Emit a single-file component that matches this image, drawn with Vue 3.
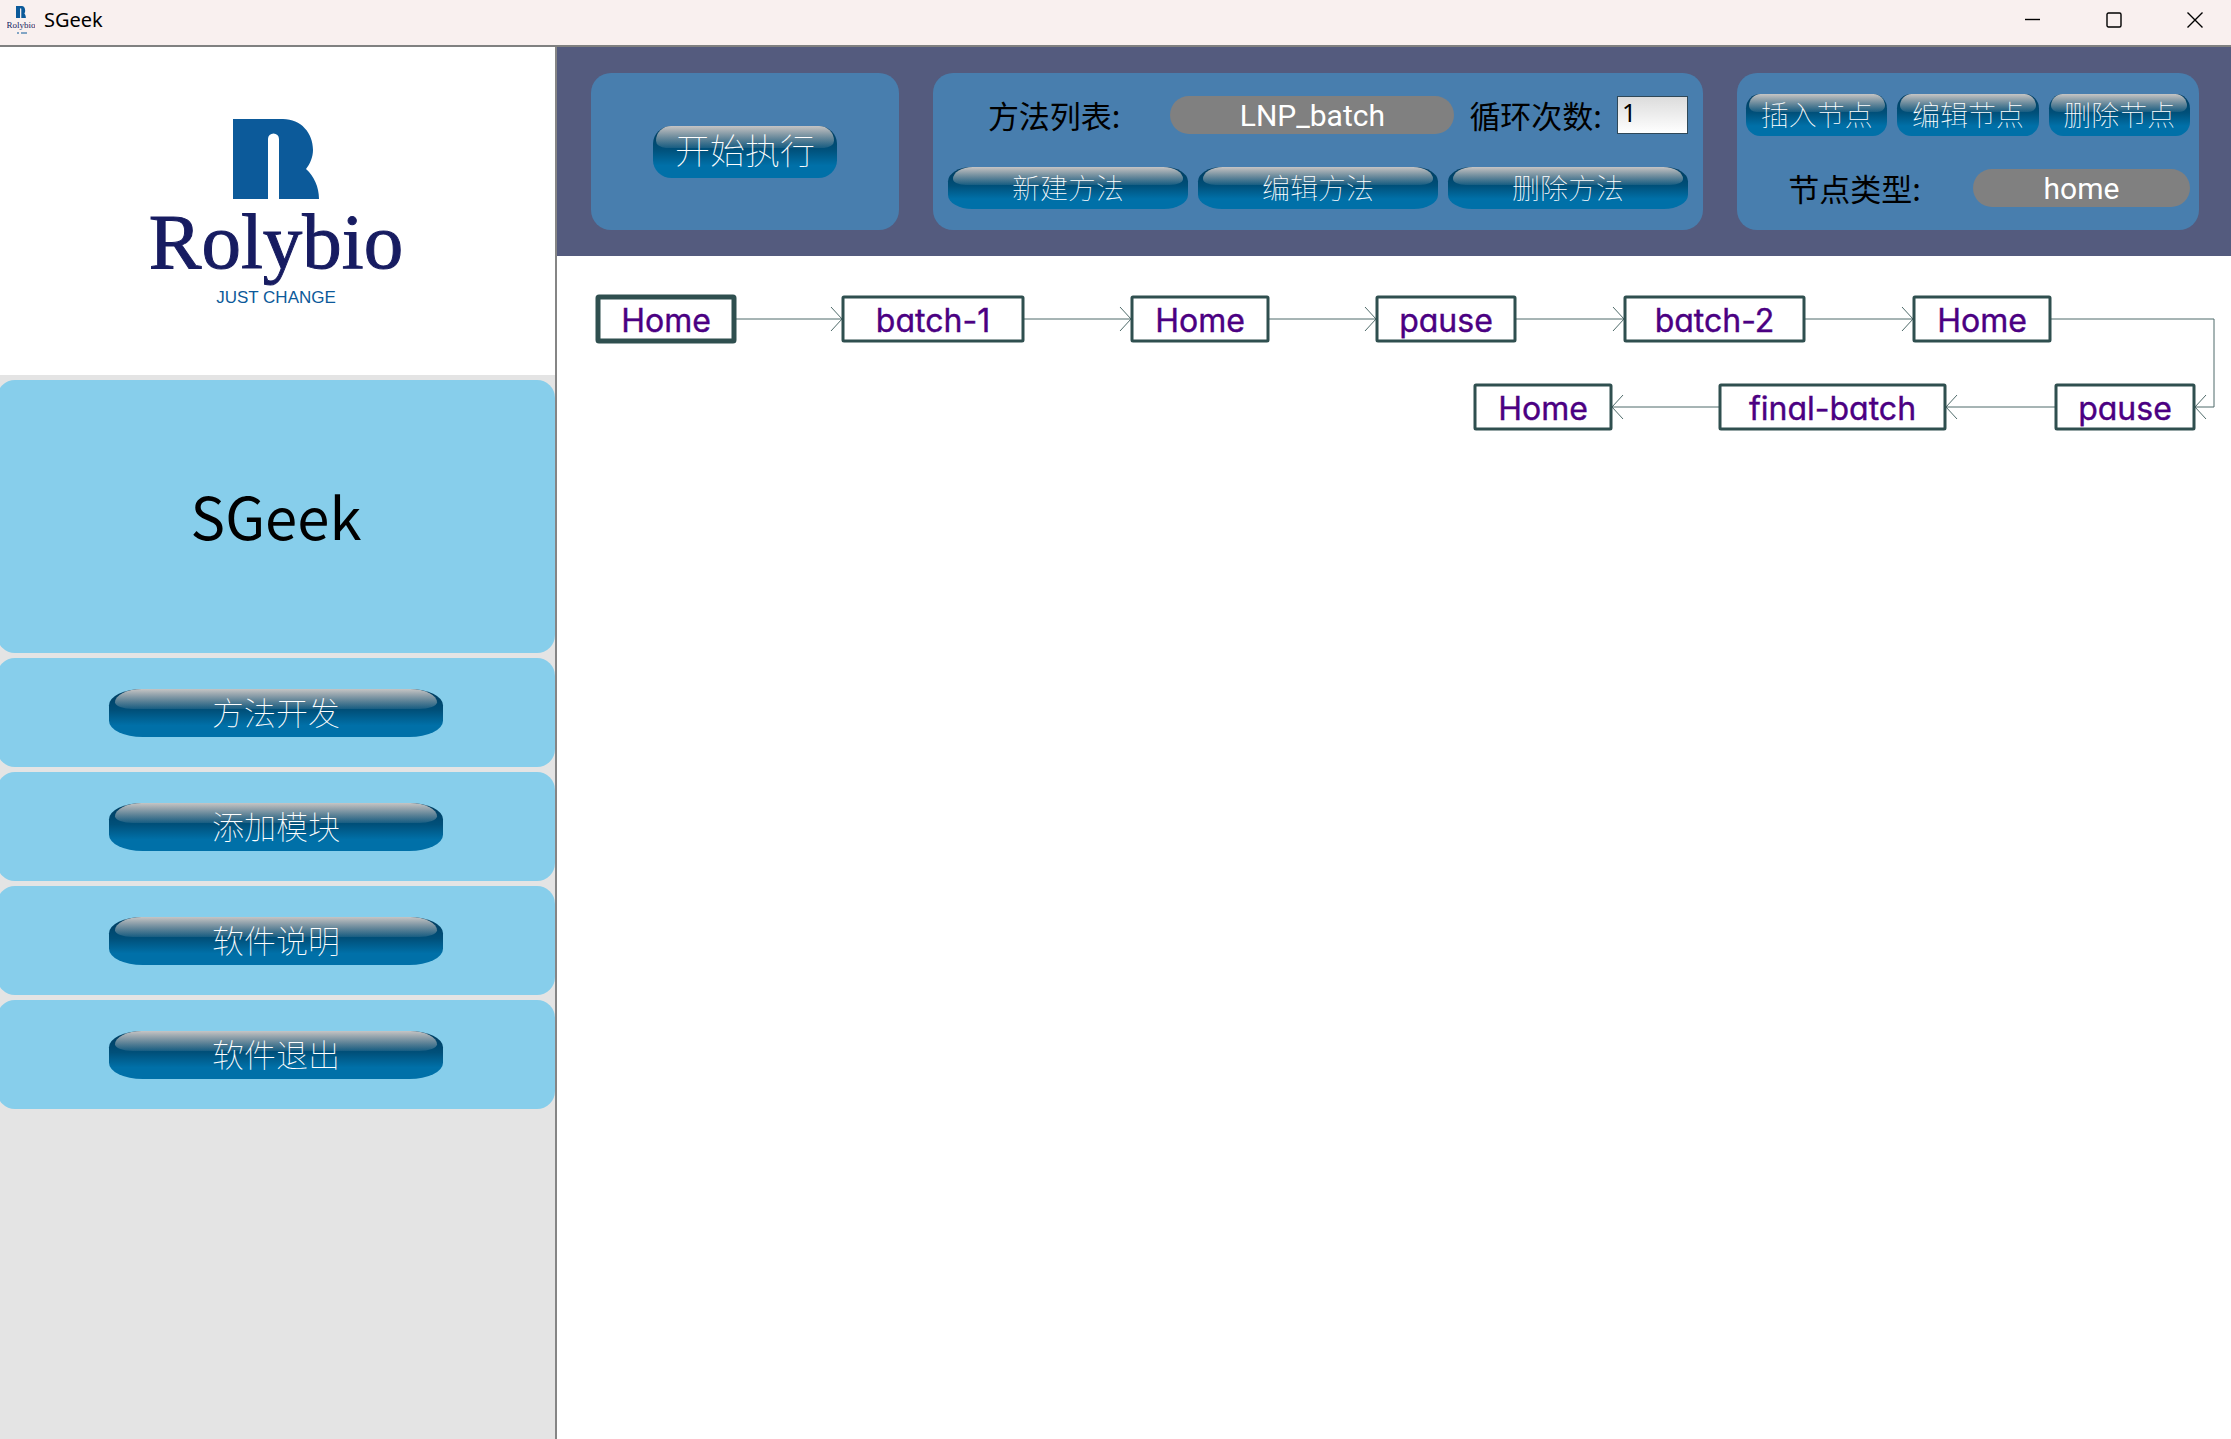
<script setup>
import { ref } from 'vue'

const method = ref('LNP_batch')
const nodeType = ref('home')
const loops = ref('1')

const menu = ['方法开发', '添加模块', '软件说明', '软件退出']
const methodActions = ['新建方法', '编辑方法', '删除方法']
const nodeActions = ['插入节点', '编辑节点', '删除节点']

// positions are relative to the canvas area
const nodes = [
  { name: 'Home', x: 41, y: 41, w: 136, active: true },
  { name: 'batch-1', x: 286, y: 41, w: 180 },
  { name: 'Home', x: 575, y: 41, w: 136 },
  { name: 'pause', x: 820, y: 41, w: 138 },
  { name: 'batch-2', x: 1068, y: 41, w: 179 },
  { name: 'Home', x: 1357, y: 41, w: 136 },
  { name: 'pause', x: 1499, y: 129, w: 138 },
  { name: 'final-batch', x: 1163, y: 129, w: 225 },
  { name: 'Home', x: 918, y: 129, w: 136 }
]
const links = [
  'M177 63H285M274 51L285 63L274 75',
  'M466 63H574M563 51L574 63L563 75',
  'M711 63H819M808 51L819 63L808 75',
  'M958 63H1067M1056 51L1067 63L1056 75',
  'M1247 63H1356M1345 51L1356 63L1345 75',
  'M1493 63H1657V151H1638M1649 139L1638 151L1649 163',
  'M1499 151H1389M1400 139L1389 151L1400 163',
  'M1163 151H1055M1066 139L1055 151L1066 163'
]
const mark = 'M0 0H50C68 0 80 14 80 31C80 38 77 45 73 50C81 57 86 68 86 80H46V20A5.5 5.5 0 0 0 35 20V80H0Z'
</script>

<template>
  <div class="window">
    <header class="titlebar">
      <svg class="app-icon" viewBox="0 0 28 28" aria-hidden="true">
        <path :d="mark" fill="#0c5a9a" transform="translate(9 0) scale(0.115 0.15)" />
        <text x="14" y="22" text-anchor="middle" class="app-icon-name">Rolybio</text>
        <path d="M10 27H12M14 27H20" stroke="#0c5a9a" />
      </svg>
      <span class="title">SGeek</span>
      <div class="controls">
        <button type="button" aria-label="Minimize">
          <svg viewBox="0 0 16 16"><path d="M0 7.5H15" /></svg>
        </button>
        <button type="button" aria-label="Maximize">
          <svg viewBox="0 0 16 16"><rect x="1" y="1" width="14" height="14" rx="1.5" /></svg>
        </button>
        <button type="button" aria-label="Close">
          <svg viewBox="0 0 16 16"><path d="M0.5 0.5L15.5 15.5M15.5 0.5L0.5 15.5" /></svg>
        </button>
      </div>
    </header>

    <div class="body">
      <aside class="sidebar">
        <div class="brand">
          <svg class="brand-mark" viewBox="0 0 86 80" aria-hidden="true"><path :d="mark" fill="#0c5a9a" /></svg>
          <div class="brand-name">Rolybio</div>
          <div class="brand-tag">JUST CHANGE</div>
        </div>
        <h1 class="card product">SGeek</h1>
        <nav class="menu">
          <div v-for="item in menu" :key="item" class="card">
            <button type="button" class="glossy wide">{{ item }}</button>
          </div>
        </nav>
      </aside>

      <main class="main">
        <div class="toolbar">
          <section class="panel run">
            <button type="button" class="glossy start">开始执行</button>
          </section>

          <section class="panel methods">
            <div class="row">
              <label class="label method-label" for="method">方法列表:</label>
              <select id="method" v-model="method" class="pill">
                <option>LNP_batch</option>
              </select>
              <label class="label loop-label" for="loops">循环次数:</label>
              <input id="loops" v-model="loops" class="loops" type="text" />
            </div>
            <div class="row">
              <button v-for="a in methodActions" :key="a" type="button" class="glossy">{{ a }}</button>
            </div>
          </section>

          <section class="panel nodes">
            <div class="row">
              <button v-for="a in nodeActions" :key="a" type="button" class="glossy">{{ a }}</button>
            </div>
            <div class="row">
              <label class="label type-label" for="type">节点类型:</label>
              <select id="type" v-model="nodeType" class="pill small">
                <option>home</option>
              </select>
            </div>
          </section>
        </div>

        <svg class="canvas">
          <path v-for="d in links" :key="d" :d="d" class="link" />
          <g v-for="(n, i) in nodes" :key="i">
            <rect :x="n.x" :y="n.y" :width="n.w" height="44" rx="1" class="node" :class="{ active: n.active }" />
            <text :x="n.x + n.w / 2" :y="n.y + 35" text-anchor="middle" class="node-name">{{ n.name }}</text>
          </g>
        </svg>
      </main>
    </div>
  </div>
</template>

<style>
body {
  margin: 0;
}
</style>

<style scoped>
* {
  box-sizing: border-box;
}
.window {
  display: flex;
  flex-direction: column;
  min-height: 100vh;
  background: #fff;
  color: #000;
  font-family: "Noto Sans CJK SC", sans-serif;
}
button,
input,
select {
  font-family: inherit;
  margin: 0;
}

.titlebar {
  display: flex;
  align-items: center;
  height: 47px;
  padding: 0 28px 6px 7px;
  background: #f9f0ef;
  border-bottom: 2px solid #808080;
}
.app-icon {
  width: 28px;
  height: 28px;
}
.app-icon-name {
  font-family: "Liberation Serif", serif;
  font-size: 9px;
  fill: #171c61;
}
.title {
  margin-left: 9px;
  font-family: "Noto Sans", sans-serif;
  font-size: 20px;
  line-height: 24px;
}
.controls {
  display: flex;
  gap: 65px;
  margin-left: auto;
}
.controls button {
  display: flex;
  padding: 0;
  border: 0;
  background: none;
}
.controls svg {
  width: 16px;
  height: 16px;
  fill: none;
  stroke: #000;
  stroke-width: 1.4;
}

.body {
  flex: 1;
  display: grid;
  grid-template-columns: 557fr 1674fr;
}
.sidebar {
  display: flex;
  flex-direction: column;
  gap: 5px;
  overflow: hidden;
  background: #e4e4e4;
  border-right: 2px solid #858585;
}
.brand {
  display: flex;
  flex-direction: column;
  align-items: center;
  height: 328px;
  padding: 72px 3px 0 0;
  background: #fff;
}
.brand-mark {
  width: 86px;
  height: 80px;
  margin-bottom: 3px;
}
.brand-name {
  font-family: "Liberation Serif", serif;
  font-size: 79px;
  line-height: 79px;
  color: #171c61;
  -webkit-text-stroke: 1px #171c61;
}
.brand-tag {
  margin-top: 7px;
  font-family: "Liberation Sans", sans-serif;
  font-size: 17px;
  line-height: 20px;
  color: #0c5a9a;
}
.card {
  display: flex;
  align-items: center;
  justify-content: center;
  height: 109px;
  margin: 0 0 0 -3px;
  border-radius: 18px;
  background: #87ceeb;
}
.product {
  height: 273px;
  padding-bottom: 3px;
  font-size: 58px;
  font-weight: 400;
}
.menu {
  display: flex;
  flex-direction: column;
  gap: 5px;
}

.glossy {
  position: relative;
  flex: 1;
  height: 42px;
  padding: 0 0 3px;
  border: 0;
  border-radius: 10% / 34%;
  background: linear-gradient(#003a5c 0%, #00507a 45%, #0070a8 76%, #0070a8 100%);
  color: #fff;
  font-size: 28px;
  line-height: 38px;
  font-weight: 100;
  isolation: isolate;
}
.glossy::before {
  content: "";
  position: absolute;
  z-index: -1;
  inset: 0 2% 57%;
  border-radius: 9% 9% 6% 6% / 70% 70% 35% 35%;
  background: linear-gradient(rgba(208, 204, 202, 0.95), rgba(190, 200, 205, 0.12));
}
.wide {
  flex: 0 0 60%;
  height: 48px;
  font-size: 32px;
}
.start {
  flex: 0 0 60%;
  height: 52px;
  padding-bottom: 5px;
  font-size: 35px;
}

.main {
  display: flex;
  flex-direction: column;
  min-width: 0;
}
.toolbar {
  display: grid;
  grid-template-columns: 2fr 5fr 3fr;
  gap: 34px;
  padding: 26px 32px 26px 34px;
  background: #545b7e;
}
.panel {
  display: flex;
  flex-direction: column;
  justify-content: space-between;
  min-width: 0;
  height: 157px;
  padding: 21px 15px;
  border-radius: 20px;
  background: #487eae;
}
.run {
  flex-direction: row;
  align-items: center;
  justify-content: center;
  padding: 0;
}
.nodes {
  padding: 21px 9px;
}
.row {
  display: flex;
  align-items: center;
  gap: 10px;
  height: 42px;
}
.label {
  font-size: 31px;
  line-height: 42px;
  text-align: center;
  white-space: nowrap;
}
.method-label {
  flex: 1;
}
.loop-label {
  padding: 0 5px;
}
.type-label {
  flex: 1;
}
.pill {
  appearance: none;
  width: 284px;
  height: 38px;
  padding: 1px 0 0;
  border: 0;
  border-radius: 19px;
  background: #808080;
  color: #fff;
  font-family: Roboto, sans-serif;
  font-size: 30px;
  line-height: 38px;
  text-align: center;
}
.small {
  width: 217px;
}
.loops {
  width: 71px;
  height: 38px;
  padding: 0 4px 6px;
  border: 1px solid #2f4858;
  background: linear-gradient(#dcdcdc, #fff);
  font-family: "Noto Sans", sans-serif;
  font-size: 25px;
}

.canvas {
  flex: 1;
  display: block;
  width: 100%;
}
.link {
  fill: none;
  stroke: #4f6b6a;
  stroke-width: 1;
}
.node {
  fill: #fff;
  stroke: #2f4f4f;
  stroke-width: 3;
}
.active {
  stroke-width: 5;
}
.node-name {
  font-family: Inter, sans-serif;
  font-size: 32px;
  font-weight: 400;
  font-feature-settings: "cv11";
  fill: #4b0082;
  stroke: #4b0082;
  stroke-width: 0.4;
}
</style>
